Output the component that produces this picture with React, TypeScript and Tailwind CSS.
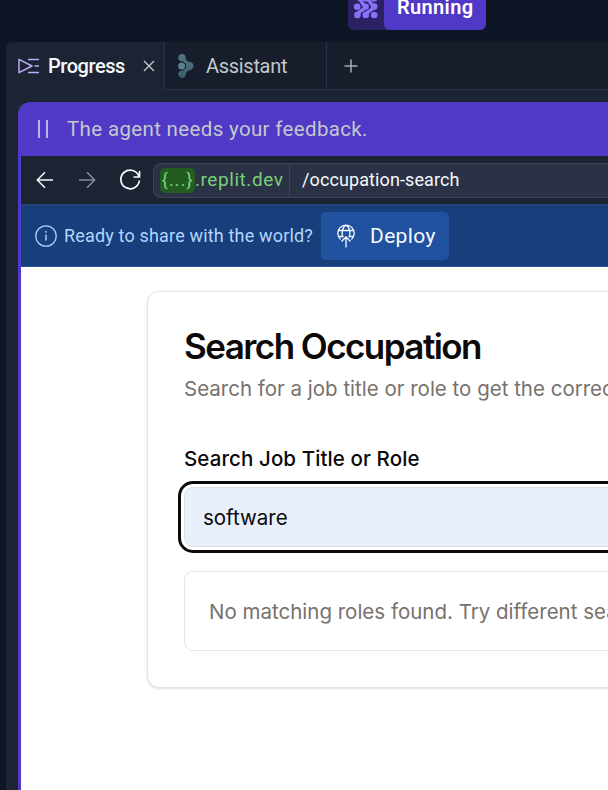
import React from 'react';

const ui = "font-['Roboto',sans-serif]";

function AgentMark() {
  return (
    <svg width="26" height="25" viewBox="0 0 26 25" fill="#8a70f8" className="shrink-0">
      <g stroke="#8a70f8" strokeWidth="3.6" strokeLinecap="round" fill="none">
        <path d="M4.4 20.8C5.5 16.5 10 17.5 12.5 12.8" />
        <path d="M12.8 20.8C14 16.5 18.5 17.5 21 12.8" />
        <path d="M4.4 4.4C9 4.4 8 10.5 12.8 12.6" />
        <path d="M12.8 4.4C17.4 4.4 16.4 10.5 21 12.6" />
      </g>
      <circle cx="12.8" cy="4.4" r="3.3" />
      <circle cx="21.2" cy="4.4" r="3.3" />
      <circle cx="4.2" cy="12.8" r="3.3" />
      <circle cx="12.8" cy="12.6" r="3.1" />
      <circle cx="21.2" cy="12.6" r="3.3" />
      <circle cx="4.4" cy="21" r="3.3" />
      <circle cx="12.8" cy="21" r="3.3" />
      <circle cx="21.2" cy="21" r="3.3" />
    </svg>
  );
}

function ProgressIcon() {
  return (
    <svg width="22" height="16" viewBox="0 0 22 16" fill="none" stroke="#b9adf5" strokeWidth="1.5" className="shrink-0">
      <path d="M1 1.3V14.7L14 8Z" strokeLinejoin="round" />
      <path d="M10 1.5H21M16.5 8H21M10 14.5H21" />
    </svg>
  );
}

function AssistantIcon() {
  return (
    <svg width="18" height="26" viewBox="0 0 18 26" className="shrink-0">
      <defs>
        <linearGradient id="assistant" x1="0" y1="0" x2="0" y2="1">
          <stop stopColor="#537583" />
          <stop offset="1" stopColor="#3c606b" />
        </linearGradient>
      </defs>
      <path
        d="M5 1A3.7 3.7 0 0 1 8.7 4.7C8.7 7.5 11 8.7 13.3 9.1A4 4 0 0 1 13.3 16.9C11 17.3 8.7 18.5 8.7 21.3A3.7 3.7 0 1 1 3.5 17.9C6.5 17.7 9.2 16 9.2 13S6.5 8.3 3.5 8.1A3.7 3.7 0 0 1 5 1Z"
        fill="url(#assistant)"
      />
      <circle cx="4.6" cy="13" r="3.5" fill="#5c8190" />
    </svg>
  );
}

function TabBar() {
  return (
    <div className="flex h-12 shrink-0">
      <div className="flex w-[158px] items-center pl-3">
        <ProgressIcon />
        <span className="ml-2 w-[78px] whitespace-nowrap text-[20px] font-medium leading-6 tracking-[-0.45px] text-[#f5f9fc]">Progress</span>
        <svg width="12" height="12" viewBox="0 0 12 12" className="ml-[17px]" stroke="#c2c8cc" strokeWidth="1.4">
          <path d="M1 1L11 11M11 1L1 11" />
        </svg>
      </div>
      <div className="flex w-[163px] items-center border-b border-l border-r border-[#2b3245] bg-[#171d2b] pl-3">
        <AssistantIcon />
        <span className="ml-[11px] whitespace-nowrap text-[20px] leading-6 tracking-[-0.3px] text-[#c2c8cc]">Assistant</span>
      </div>
      <div className="flex flex-1 items-center border-b border-[#2b3245] bg-[#171d2b] pl-4">
        <svg width="16" height="16" viewBox="0 0 16 16" stroke="#a9afb9" strokeWidth="1.5">
          <path d="M8 1.5V14.5M1.5 8H14.5" />
        </svg>
      </div>
    </div>
  );
}

function Toolbar() {
  return (
    <div className="flex h-12 shrink-0 items-center bg-[#1c2333] pl-[15px]">
      <svg width="18" height="18" viewBox="0 0 18 18" fill="none" stroke="#f5f9fc" strokeWidth="1.5">
        <path d="M17 9H1.5M9 1.3L1.3 9L9 16.7" />
      </svg>
      <svg width="18" height="18" viewBox="0 0 18 18" fill="none" stroke="#858b98" strokeWidth="1.5" className="ml-6">
        <path d="M1 9H16.5M9 1.3L16.7 9L9 16.7" />
      </svg>
      <svg width="24" height="24" viewBox="0 0 24 24" fill="none" stroke="#f5f9fc" strokeWidth="1.7" className="ml-[22px]">
        <path d="M21.5 3V9H15.5M21 8.5A9.3 9.3 0 1 0 21.4 12.5" />
      </svg>
      <div className="ml-[11px] flex h-[35px] flex-1 items-center rounded-l-lg border border-r-0 border-[#3c445c] bg-[#2b3245] text-[19px] leading-6">
        <div className="flex h-full w-[136px] items-center border-r border-[#3c445c] pl-[6px] text-[#78cf7a]">
          <span className="flex h-[25px] w-[35px] items-center justify-center rounded-[5px] bg-[#235b20] tracking-[0.8px]">{'{...}'}</span>
          <span className="tracking-[0.55px]">.replit.dev</span>
        </div>
        <span className="ml-3 whitespace-nowrap text-[18px] tracking-[0.1px] text-[#f5f9fc]">/occupation-search</span>
      </div>
    </div>
  );
}

function DeployBanner() {
  return (
    <div className="flex h-[63px] shrink-0 items-center border-t-2 border-b border-[#2052a0] border-t-[#24427a] bg-[#183e7b] pl-[14px]">
      <svg width="22" height="22" viewBox="0 0 22 22" fill="none" stroke="#a9cdfa" strokeWidth="1.3">
        <circle cx="11" cy="11" r="10.2" />
        <path d="M11 9.5V15.5M11 6V7.7" strokeWidth="1.5" />
      </svg>
      <span className="ml-[7px] w-[257px] whitespace-nowrap text-[18px] leading-6 tracking-[0.17px] text-[#b3d5ff]">Ready to share with the world?</span>
      <button className="flex h-12 w-32 items-center rounded-[5px] bg-[#2052a0] pl-4 text-[21px] leading-6 tracking-[0.35px] text-[#f5f9fc]">
        <svg width="18" height="24" viewBox="0 0 18 24" fill="none" stroke="#f5f9fc" strokeWidth="1.3">
          <path d="M3.6 15.5A8.2 8.2 0 1 1 14.4 15.5M1.2 6.5H16.8M1.5 12.5H6.5M11.5 12.5H16.5M6 13.5C3.8 8 6.5 1.5 9 1.5S14.2 8 12 13.5M9 23.5V13M4.5 17.5L9 13L13.5 17.5" />
        </svg>
        <span className="ml-[15px]">Deploy</span>
      </button>
    </div>
  );
}

function Preview() {
  return (
    <main className="flex-1 bg-white pl-[126px] pt-6 font-['Inter',sans-serif]">
      <section className="h-[397px] w-[700px] rounded-xl border border-[#e5e5e5] bg-white pl-9 pt-9 shadow-sm">
        <h1 className="whitespace-nowrap text-[35px] font-semibold leading-9 tracking-[-1.55px] text-[#0c0a09]">Search Occupation</h1>
        <p className="mt-[10px] whitespace-nowrap text-[20.5px] leading-[30px] text-[#78716c]">Search for a job title or role to get the correct occupation</p>
        <label className="mt-[44px] block whitespace-nowrap text-[20.5px] font-medium leading-[21px] tracking-[0.1px] text-[#0c0a09]">Search Job Title or Role</label>
        <div className="mt-[18px] flex h-[60px] items-center rounded-[9px] border border-[#e0e0e3] bg-[#e8effd] pl-[18px] pt-0.5 text-[20.5px] leading-[30px] text-[#0c0a09] outline-[3px] outline-offset-[3px] outline-[#0c0a09]">software</div>
        <div className="mt-6 flex h-20 items-center rounded-[9px] border border-[#e5e5e5] pl-6 pt-0.5 text-[20.5px] leading-[30px] text-[#78716c]">
          <span className="whitespace-nowrap">No matching roles found. Try different search terms.</span>
        </div>
      </section>
    </main>
  );
}

export default function App() {
  return (
    <div className={`flex h-[790px] w-[608px] flex-col overflow-hidden bg-[#0e1525] ${ui}`}>
      <header className="flex h-[42px] shrink-0 items-start pl-[348px]">
        <div className="flex h-[30px] w-[138px] rounded-b-md bg-[#2b2163]">
          <div className="flex w-9 items-end pb-[11px] pl-[5px]">
            <AgentMark />
          </div>
          <div className="flex-1 rounded-b-md bg-[#5039c6] pl-[13px]">
            <span className="-mt-[5px] block whitespace-nowrap text-[20px] font-semibold leading-6 tracking-[0.35px] text-white">Running</span>
          </div>
        </div>
      </header>
      <div className="ml-[6px] flex flex-1 flex-col overflow-hidden rounded-tl-md bg-[#1c2333]">
        <TabBar />
        <div className="ml-3 mt-3 flex flex-1 flex-col overflow-hidden rounded-tl-xl bg-[#5039c6] pl-[3px]">
          <div className="flex h-[54px] shrink-0 items-center pl-[17px]">
            <svg width="12" height="18" viewBox="0 0 12 18" stroke="#d0cdf0" strokeWidth="1.7">
              <path d="M1 0V18M9 0V18" />
            </svg>
            <span className="ml-[17px] whitespace-nowrap text-[20.5px] leading-6 tracking-[0.35px] text-[#c2c8cc]">The agent needs your feedback.</span>
          </div>
          <Toolbar />
          <DeployBanner />
          <Preview />
        </div>
      </div>
    </div>
  );
}
